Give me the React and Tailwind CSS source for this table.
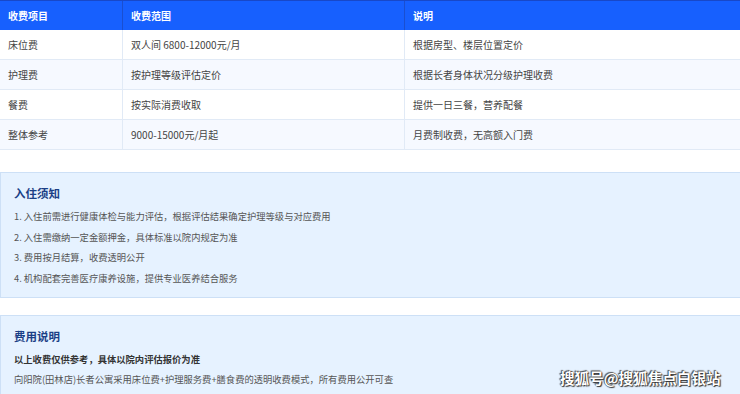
const rows = [
  ["床位费", "双人间 6800-12000元/月", "根据房型、楼层位置定价"],
  ["护理费", "按护理等级评估定价", "根据长者身体状况分级护理收费"],
  ["餐费", "按实际消费收取", "提供一日三餐，营养配餐"],
  ["整体参考", "9000-15000元/月起", "月费制收费，无高额入门费"],
];

const notices = [
  "1. 入住前需进行健康体检与能力评估，根据评估结果确定护理等级与对应费用",
  "2. 入住需缴纳一定金额押金，具体标准以院内规定为准",
  "3. 费用按月结算，收费透明公开",
  "4. 机构配套完善医疗康养设施，提供专业医养结合服务",
];

export default function App() {
  return (
    <div className="relative w-[740px] h-[394px] overflow-hidden bg-white font-['Noto_Sans_CJK_SC','Noto_Sans',sans-serif]">
      {/* Fee table */}
      <div className="w-full">
        <div className="grid grid-cols-[123px_282px_1fr] h-[30px] bg-[#1760fe] border-t border-[#1848c8] text-white text-[10px] font-bold">
          <div className="flex items-center pl-2 border-r border-[#1a4fd0]">收费项目</div>
          <div className="flex items-center pl-2 border-r border-[#1a4fd0]">收费范围</div>
          <div className="flex items-center pl-2">说明</div>
        </div>
        {rows.map((r, i) => (
          <div
            key={i}
            className={`grid grid-cols-[123px_282px_1fr] h-[30px] border-b border-[#e1eaf6] text-[10px] text-[#444] ${i % 2 === 1 ? "bg-[#f6f9ff]" : "bg-white"}`}
          >
            <div className="flex items-center pl-2 border-r border-[#e1eaf6]">{r[0]}</div>
            <div className="flex items-center pl-2 border-r border-[#e1eaf6]">{r[1]}</div>
            <div className="flex items-center pl-2">{r[2]}</div>
          </div>
        ))}
      </div>

      {/* Notice box */}
      <div className="mt-[22px] h-[126px] bg-[#e6f2ff] border border-r-0 border-[#cde0f6] px-[13px] pt-[12px]">
        <h3 className="text-[11.5px] leading-[16px] font-bold text-[#1b3f86] mb-[5px]">入住须知</h3>
        {notices.map((n) => (
          <p key={n} className="text-[9.3px] leading-[20.5px] text-[#555]">{n}</p>
        ))}
      </div>

      {/* Fee description */}
      <div className="mt-[17px] h-[100px] bg-[#e6f2ff] border border-r-0 border-[#cde0f6] px-[13px] pt-[12px]">
        <h3 className="text-[11.5px] leading-[16px] font-bold text-[#1b3f86] mb-[5px]">费用说明</h3>
        <p className="text-[9.3px] leading-[20px] font-bold text-[#333]">以上收费仅供参考，具体以院内评估报价为准</p>
        <p className="text-[9.3px] leading-[20px] text-[#555]">向阳院(田林店)长者公寓采用床位费+护理服务费+膳食费的透明收费模式，所有费用公开可查</p>
      </div>

      {/* Watermark */}
      <div className="absolute left-[560px] top-[368px] text-[14.6px] leading-[20px] text-white font-bold [text-shadow:0_0_1px_#222,1px_1px_1px_#333,-1px_-1px_1px_#555]">
        搜狐号@搜狐焦点白银站
      </div>
    </div>
  );
}
